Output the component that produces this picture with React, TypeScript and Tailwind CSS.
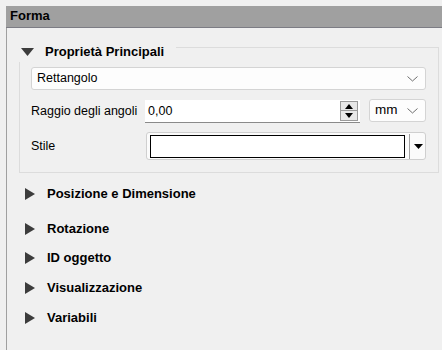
import type { ReactNode } from 'react';

const sections = [
  { label: 'Posizione e Dimensione', h: 'h-[42px]' },
  { label: 'Rotazione', h: 'h-[28px]' },
  { label: 'ID oggetto', h: 'h-[30px]' },
  { label: 'Visualizzazione', h: 'h-[30px]' },
  { label: 'Variabili', h: 'h-[30px]' },
];

function Chevron() {
  return (
    <svg width="11" height="6" viewBox="0 0 11 6" className="shrink-0">
      <polyline points="0.5,0.5 5.5,5 10.5,0.5" fill="none" stroke="#6e6e6e" strokeWidth="1" />
    </svg>
  );
}

function Combo({ children, className }: { children: ReactNode; className: string }) {
  return (
    <div
      className={`flex items-center justify-between rounded-[3px] border border-[#d4d4d4] bg-[#fdfdfd] pl-[5px] pr-[7px] ${className}`}
    >
      <span>{children}</span>
      <Chevron />
    </div>
  );
}

function SpinButtons() {
  return (
    <div className="flex flex-col w-[18px] mr-[2px]">
      <div className="h-[10px] flex items-center justify-center border border-[#9a9a9a] bg-[#e8e8e8]">
        <svg width="8" height="5" viewBox="0 0 8 5">
          <polygon points="4,0 8,5 0,5" fill="#000" />
        </svg>
      </div>
      <div className="h-[10px] flex items-center justify-center border border-t-0 border-[#9a9a9a] bg-[#e8e8e8]">
        <svg width="8" height="5" viewBox="0 0 8 5">
          <polygon points="0,0 8,0 4,5" fill="#000" />
        </svg>
      </div>
    </div>
  );
}

export default function App() {
  return (
    <div
      className="w-[442px] h-[350px] overflow-hidden bg-[#f0f0f0] pt-[6px] text-black text-[12.5px]"
      style={{ fontFamily: '"Liberation Sans", Arial, sans-serif' }}
    >
      <div className="ml-[6px] h-[344px] border-l border-[#a0a0a0]">
        {/* Panel title */}
        <div className="-ml-px h-[22px] bg-[#a0a0a0] border-b border-[#7c7c84] flex items-center pl-[4px] pb-[1px]">
          <span className="font-bold text-[13px]">Forma</span>
        </div>

        {/* Main properties group */}
        <div className="mt-[19px] ml-[12px] mr-[3px] border border-[#dcdcdc] pl-[11px] pr-[12px] pb-[12px]">
          <div className="-mt-[7px] -ml-[12px] h-[21px] w-[157px] bg-[#f0f0f0] flex items-center">
            <svg width="13" height="8" viewBox="0 0 13 8" className="ml-[2px] mt-[1px]">
              <polygon points="0,0 13,0 6.5,8" fill="#3c3c3c" />
            </svg>
            <span className="ml-[11px] font-bold text-[13px]">Proprietà Principali</span>
          </div>

          <Combo className="mt-[5px] h-[23px]">Rettangolo</Combo>

          <div className="mt-[10px] flex items-start">
            <span className="w-[114px] h-[23px] leading-[23px]">Raggio degli angoli</span>
            <div className="w-[215px] h-[23px] flex items-center justify-between bg-white border-b border-[#8a8a8a] pl-[3px]">
              <span>0,00</span>
              <SpinButtons />
            </div>
            <Combo className="ml-[9px] -mt-[1px] w-[57px] h-[23px]">
              <span className="text-[13.5px]">mm</span>
            </Combo>
          </div>

          <div className="mt-[9px] flex items-center">
            <span className="w-[115px]">Stile</span>
            <div className="flex-1 h-[28px] flex items-center rounded-[3px] border border-[#cfcfcf] bg-[#fbfbfb] pl-[3px]">
              <div className="w-[255px] h-[23px] bg-white border border-black" />
              <div className="ml-[4px] w-px h-[25px] bg-[#a0a0a0]" />
              <svg width="9" height="5" viewBox="0 0 9 5" className="ml-[4px]">
                <polygon points="0,0 9,0 4.5,5" fill="#000" />
              </svg>
            </div>
          </div>
        </div>

        {/* Collapsed sections */}
        <div className="flex flex-col">
          {sections.map((s) => (
            <div key={s.label} className={`${s.h} flex items-center pl-[18px]`}>
              <svg width="10" height="12" viewBox="0 0 10 12">
                <polygon points="0,0 10,6 0,12" fill="#3c3c3c" />
              </svg>
              <span className="ml-[12px] font-bold text-[13px]">{s.label}</span>
            </div>
          ))}
        </div>
      </div>
    </div>
  );
}
